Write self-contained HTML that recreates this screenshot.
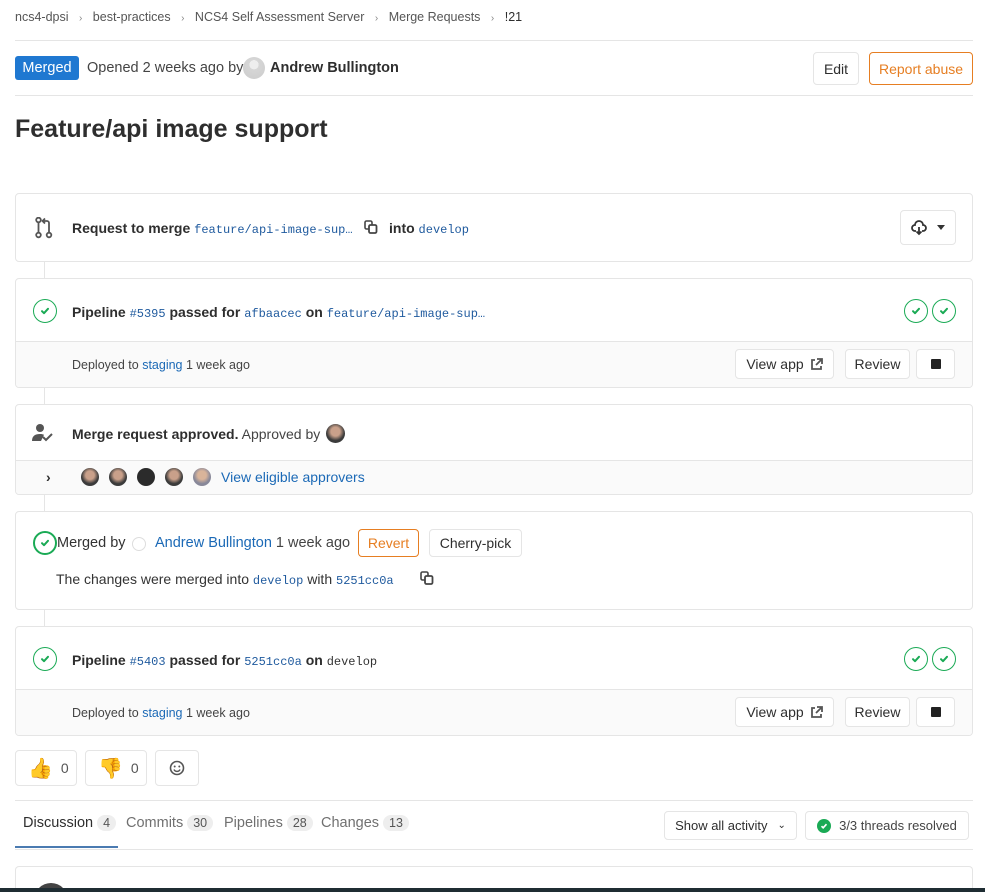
<!DOCTYPE html>
<html style="overflow:hidden;height:892px"><head><meta charset="utf-8"><style>
*{box-sizing:border-box;margin:0;padding:0}
body{width:985px;height:892px;overflow:hidden;background:#fff;font-family:"Liberation Sans",sans-serif;font-size:14px;color:#2e2e2e;position:relative}
.a{position:absolute}
.mono{font-family:"Liberation Mono",monospace;font-size:12px;color:#1f5a9e}
.link{color:#1b69b6}
.card{position:absolute;left:15px;width:958px;border:1px solid #e5e5e5;border-radius:4px;background:#fff;overflow:hidden}
.foot{position:absolute;left:0;right:0;bottom:0;background:#fafafa;border-top:1px solid #e5e5e5}
.btn{position:absolute;border:1px solid #e5e5e5;border-radius:4px;background:#fff;font-size:14px;color:#2e2e2e;display:flex;align-items:center;justify-content:center}
.vl{position:absolute;left:44px;width:1px;background:#e5e5e5}
.hr{position:absolute;left:15px;width:958px;height:1px;background:#e5e5e5}
.ok{position:absolute;width:24px;height:24px;border:1.5px solid #1aaa55;border-radius:50%;display:flex;align-items:center;justify-content:center}
.badge{display:inline-block;background:#eee;border-radius:10px;padding:1px 6px;font-size:12.5px;color:#555;margin-left:4px}
.av{position:absolute;width:18px;height:18px;border-radius:50%;background:radial-gradient(circle at 50% 40%,#c9a08a 30%,#3b3b3b 60%)}
</style></head><body>
<svg width="0" height="0" style="position:absolute"><defs><symbol id="ck" viewBox="0 0 12 12"><path d="M3 6.2l2 2 4-4.4" fill="none" stroke="#1aaa55" stroke-width="2" stroke-linecap="round" stroke-linejoin="round"/></symbol>
<symbol id="cp" viewBox="0 0 14 14"><rect x="1" y="1" width="7" height="8" rx="1.5" fill="none" stroke="#444" stroke-width="1.6"/><rect x="5" y="5" width="7.5" height="8" rx="1.5" fill="#fff" stroke="#444" stroke-width="1.8"/></symbol></defs></svg>

<div class="a" style="left:15px;top:10px;font-size:12.5px;color:#555">ncs4-dpsi <span style="margin:0 7px;color:#888;font-size:10px">›</span> best-practices <span style="margin:0 7px;color:#888;font-size:10px">›</span> NCS4 Self Assessment Server <span style="margin:0 7px;color:#888;font-size:10px">›</span> Merge Requests <span style="margin:0 7px;color:#888;font-size:10px">›</span> <span style="color:#2e2e2e">!21</span></div>
<div class="hr" style="top:40px"></div>
<div class="a" style="left:15px;top:56px;width:64px;height:24px;background:#1f78d1;border-radius:3px;color:#fff;font-size:14.5px;display:flex;align-items:center;justify-content:center">Merged</div>
<div class="a" style="left:87px;top:60px;font-size:14.5px;color:#444">Opened 2 weeks ago by</div>
<div class="a" style="left:243px;top:57px;width:22px;height:22px;border-radius:50%;background:radial-gradient(circle at 50% 35%,#eee 25%,#d6d6d6 26%,#ccc)"></div>
<div class="a" style="left:270px;top:60px;font-size:14.5px;font-weight:bold">Andrew Bullington</div>
<div class="btn" style="left:813px;top:52px;width:46px;height:33px">Edit</div>
<div class="btn" style="left:869px;top:52px;width:104px;height:33px;border-color:#e67e22;color:#e67e22">Report abuse</div>
<div class="hr" style="top:95px"></div>
<div class="a" style="left:15px;top:115px;font-size:25px;font-weight:bold;color:#2e2e2e">Feature/api image support</div>

<!-- card1 -->
<div class="card" style="top:193px;height:69px">
<svg class="a" style="left:19px;top:23px" width="18" height="22" viewBox="0 0 18 22"><circle cx="3.5" cy="18" r="2.3" fill="none" stroke="#555" stroke-width="1.8"/><circle cx="14" cy="18" r="2.3" fill="none" stroke="#555" stroke-width="1.8"/><circle cx="3.5" cy="3" r="2.3" fill="none" stroke="#555" stroke-width="1.8"/><path d="M3.5 5.5v10M14 15.5V6a2 2 0 0 0-2-2H8M10 1.5L7.5 4 10 6.5" fill="none" stroke="#555" stroke-width="1.8"/></svg>
<div class="a" style="left:56px;top:26px;white-space:nowrap"><b>Request to merge</b> <span class="mono">feature/api-image-sup…</span></div>
<svg class="a" style="left:348px;top:26px" width="14" height="14"><use href="#cp"/></svg>
<div class="a" style="left:373px;top:26px"><b>into</b> <span class="mono">develop</span></div>
<div class="btn" style="left:884px;top:16px;width:56px;height:35px"><svg width="16" height="16" viewBox="0 0 16 16"><path d="M5 11H4a3 3 0 0 1 0-6 4 4 0 0 1 8 0 3 3 0 0 1 0 6h-1M8 7v7M5.5 11.5L8 14l2.5-2.5" fill="none" stroke="#333" stroke-width="1.8"/></svg><span style="margin-left:10px;border-left:4px solid transparent;border-right:4px solid transparent;border-top:5px solid #333"></span></div>
</div>
<div class="vl" style="top:262px;height:16px"></div>

<!-- card2 -->
<div class="card" style="top:278px;height:110px">
<div class="ok" style="left:17px;top:20px"><svg width="12" height="12"><use href="#ck"/></svg></div>
<div class="a" style="left:56px;top:25px;white-space:nowrap"><b>Pipeline</b> <span class="mono">#5395</span> <b>passed for</b> <span class="mono">afbaacec</span> <b>on</b> <span class="mono">feature/api-image-sup…</span></div>
<div class="ok" style="left:888px;top:20px"><svg width="12" height="12"><use href="#ck"/></svg></div>
<div class="ok" style="left:916px;top:20px"><svg width="12" height="12"><use href="#ck"/></svg></div>
<div class="foot" style="height:46px">
<div class="a" style="left:56px;top:16px;font-size:12.5px;color:#444">Deployed to <span class="link">staging</span> 1 week ago</div>
<div class="btn" style="left:719px;top:7px;width:99px;height:30px">View app <svg style="margin-left:6px" width="13" height="13" viewBox="0 0 13 13"><path d="M5 2H2v9h9V8M7 1h5v5M12 1L6 7" fill="none" stroke="#555" stroke-width="1.8"/></svg></div>
<div class="btn" style="left:829px;top:7px;width:65px;height:30px">Review</div>
<div class="btn" style="left:900px;top:7px;width:39px;height:30px"><span style="width:10px;height:10px;background:#222;border-radius:1px"></span></div>
</div></div>
<div class="vl" style="top:388px;height:16px"></div>

<!-- card3 -->
<div class="card" style="top:404px;height:91px">
<svg class="a" style="left:16px;top:18px" width="22" height="20" viewBox="0 0 22 20"><circle cx="8" cy="5" r="4" fill="#555"/><path d="M0 18c0-5 3-7 8-7 2 0 3 .3 4 .8L9 18z" fill="#555"/><path d="M11 14l3 3 6-6" fill="none" stroke="#555" stroke-width="2"/></svg>
<div class="a" style="left:56px;top:21px;white-space:nowrap"><b>Merge request approved.</b> <span style="color:#444">Approved by</span></div>
<div class="av" style="left:310px;top:19px;width:19px;height:19px"></div>
<div class="foot" style="height:34px">
<div class="a" style="left:30px;top:8px;font-weight:bold;font-size:14px">›</div>
<div class="av" style="left:65px;top:7px"></div><div class="av" style="left:93px;top:7px"></div><div class="av" style="left:121px;top:7px;background:#2b2b2b"></div><div class="av" style="left:149px;top:7px"></div><div class="av" style="left:177px;top:7px;background:radial-gradient(circle at 50% 40%,#d9b49a 30%,#889 60%)"></div>
<div class="a link" style="left:205px;top:8px">View eligible approvers</div>
</div></div>
<div class="vl" style="top:495px;height:16px"></div>

<!-- card4 -->
<div class="card" style="top:511px;height:99px">
<div class="ok" style="left:17px;top:19px;border-width:2px"><svg width="12" height="12"><use href="#ck"/></svg></div>
<div class="a" style="left:41px;top:23px;font-size:14.5px;color:#333">Merged by</div>
<div class="a" style="left:116px;top:25px;width:14px;height:14px;border:1px solid #ddd;border-radius:50%"></div>
<div class="a" style="left:139px;top:23px;font-size:14.5px"><span class="link">Andrew Bullington</span> <span style="color:#444">1 week ago</span></div>
<div class="btn" style="left:342px;top:17px;width:61px;height:28px;border-color:#e67e22;color:#e67e22">Revert</div>
<div class="btn" style="left:413px;top:17px;width:93px;height:28px">Cherry-pick</div>
<div class="a" style="left:40px;top:59px;color:#333">The changes were merged into <span class="mono">develop</span> with <span class="mono">5251cc0a</span></div>
<svg class="a" style="left:404px;top:59px" width="14" height="14"><use href="#cp"/></svg>
</div>
<div class="vl" style="top:610px;height:16px"></div>

<!-- card5 -->
<div class="card" style="top:626px;height:110px">
<div class="ok" style="left:17px;top:20px"><svg width="12" height="12"><use href="#ck"/></svg></div>
<div class="a" style="left:56px;top:25px;white-space:nowrap"><b>Pipeline</b> <span class="mono">#5403</span> <b>passed for</b> <span class="mono">5251cc0a</span> <b>on</b> <span class="mono" style="color:#333">develop</span></div>
<div class="ok" style="left:888px;top:20px"><svg width="12" height="12"><use href="#ck"/></svg></div>
<div class="ok" style="left:916px;top:20px"><svg width="12" height="12"><use href="#ck"/></svg></div>
<div class="foot" style="height:46px">
<div class="a" style="left:56px;top:16px;font-size:12.5px;color:#444">Deployed to <span class="link">staging</span> 1 week ago</div>
<div class="btn" style="left:719px;top:7px;width:99px;height:30px">View app <svg style="margin-left:6px" width="13" height="13" viewBox="0 0 13 13"><path d="M5 2H2v9h9V8M7 1h5v5M12 1L6 7" fill="none" stroke="#555" stroke-width="1.8"/></svg></div>
<div class="btn" style="left:829px;top:7px;width:65px;height:30px">Review</div>
<div class="btn" style="left:900px;top:7px;width:39px;height:30px"><span style="width:10px;height:10px;background:#222;border-radius:1px"></span></div>
</div></div>

<!-- emoji -->
<div class="btn" style="left:15px;top:750px;width:62px;height:36px;justify-content:flex-start;padding-left:12px"><span style="font-size:20px;color:#f6b73c">👍</span><span style="margin-left:8px;color:#555">0</span></div>
<div class="btn" style="left:85px;top:750px;width:62px;height:36px;justify-content:flex-start;padding-left:12px"><span style="font-size:20px;color:#f6b73c">👎</span><span style="margin-left:8px;color:#555">0</span></div>
<div class="btn" style="left:155px;top:750px;width:44px;height:36px"><svg width="16" height="16" viewBox="0 0 16 16"><circle cx="8" cy="8" r="6.5" fill="none" stroke="#555" stroke-width="1.6"/><circle cx="5.7" cy="6.5" r="1" fill="#555"/><circle cx="10.3" cy="6.5" r="1" fill="#555"/><path d="M5 9.5a3.3 3.3 0 0 0 6 0" fill="none" stroke="#555" stroke-width="1.5"/></svg></div>

<div class="hr" style="top:800px"></div>
<div class="a" style="left:23px;top:815px;white-space:nowrap;font-size:14.5px"><span style="color:#2e2e2e">Discussion</span><span class="badge">4</span></div>
<div class="a" style="left:126px;top:815px;white-space:nowrap;font-size:14.5px;color:#707070">Commits<span class="badge">30</span></div>
<div class="a" style="left:224px;top:815px;white-space:nowrap;font-size:14.5px;color:#707070">Pipelines<span class="badge">28</span></div>
<div class="a" style="left:321px;top:815px;white-space:nowrap;font-size:14.5px;color:#707070">Changes<span class="badge">13</span></div>
<div class="a" style="left:15px;top:846px;width:103px;height:2px;background:#4b7bb1"></div>
<div class="hr" style="top:849px"></div>
<div class="btn" style="left:664px;top:811px;width:133px;height:29px;font-size:13px">Show all activity <span style="margin-left:10px;font-size:10px">⌄</span></div>
<div class="btn" style="left:805px;top:811px;width:164px;height:29px;font-size:13px;color:#444"><span style="width:14px;height:14px;border-radius:50%;background:#1aaa55;display:inline-flex;align-items:center;justify-content:center;margin-right:8px"><svg width="10" height="10" viewBox="0 0 12 12"><path d="M3 6.2l2 2 4-4.4" fill="none" stroke="#fff" stroke-width="2"/></svg></span>3/3 threads resolved</div>

<div class="card" style="top:866px;height:26px;border-bottom:none;border-radius:4px 4px 0 0">
<div class="a" style="left:18px;top:16px;width:34px;height:34px;border-radius:50%;background:#444"></div>
</div>
<div class="a" style="left:0;top:888px;width:985px;height:4px;background:#1f2d33"></div>
</body></html>
